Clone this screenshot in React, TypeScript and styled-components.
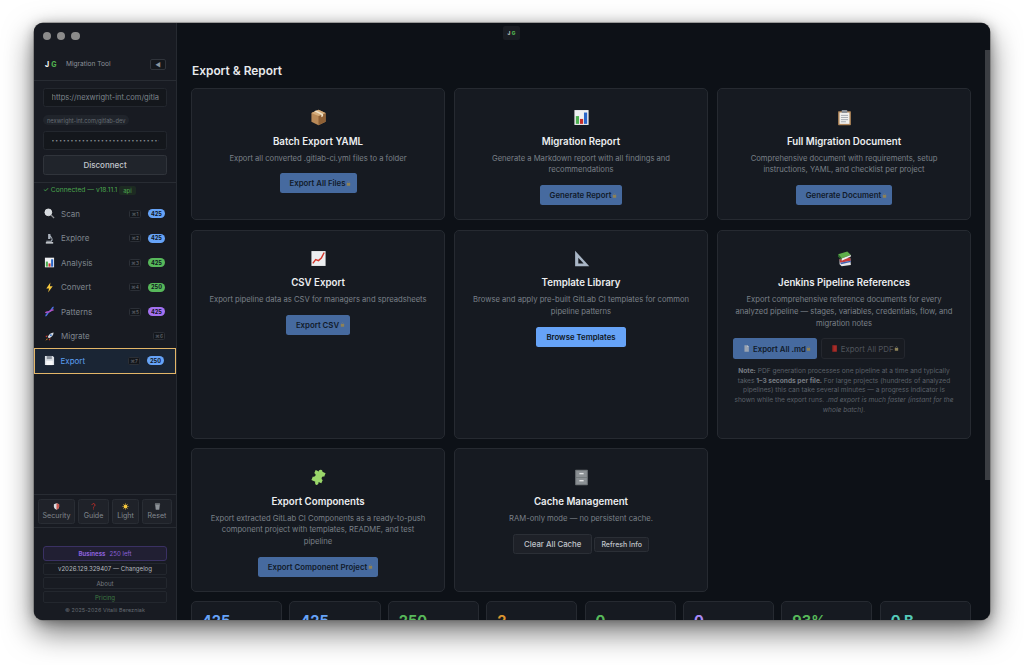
import React from 'react';
import styled, { createGlobalStyle } from 'styled-components';

const Global = createGlobalStyle`
  html, body { margin: 0; padding: 0; background: #fff; }
  * { box-sizing: border-box; }
  body { font-family: Inter, "Liberation Sans", sans-serif; }
`;

const Page = styled.div`
  padding: 23px 34px 45px;
  height: 665px;
  overflow: hidden;
`;
const Win = styled.div`
  position: relative;
  width: 956px;
  height: 597px;
  display: flex;
  border-radius: 9px;
  overflow: hidden;
  background: #0d1117;
  box-shadow: 0 0 0 .5px #666, 0 12px 30px rgba(0,0,0,.55), 0 2px 12px rgba(0,0,0,.3);
`;
const Side = styled.aside`
  width: 143px;
  flex: none;
  display: flex;
  flex-direction: column;
  background: #181b22;
  border-right: 1px solid #262a31;
`;
const Traffic = styled.div`
  height: 27px;
  display: flex;
  gap: 5.7px;
  padding: 9px 0 0 9px;
`;
const Dot = styled.span`
  width: 8.4px;
  height: 8.4px;
  border-radius: 50%;
  background: #8b8b8b;
`;
const Brand = styled.div`
  height: 31px;
  display: flex;
  align-items: center;
  padding: 0 10px 2px 11px;
  border-bottom: 1px solid #282c33;
`;
const LogoMark = styled.span`
  width: 13px;
  font-size: 7px;
  font-weight: 800;
  color: #f0f0f0;
  white-space: nowrap;
  b { color: #4fae4e; font-weight: 800; margin-left: 2px; }
`;
const BrandText = styled.span`
  flex: 1;
  margin-left: 8px;
  font-size: 6.6px;
  color: #8a9098;
`;
const Collapse = styled.span`
  width: 16px;
  height: 11px;
  display: flex;
  align-items: center;
  justify-content: center;
  border: 1px solid #30343b;
  border-radius: 2px;
  font-size: 6px;
  color: #8b949e;
  background: #14171c;
`;
const Conn = styled.div`
  padding: 7px 9px 7px;
  display: flex;
  flex-direction: column;
  align-items: flex-start;
  border-bottom: 1px solid #282c33;
`;
const Field = styled.div`
  width: 124px;
  height: 19px;
  padding: 0 7.5px;
  display: flex;
  align-items: center;
  border: 1px solid #23272e;
  border-radius: 2.5px;
  background: #14171c;
  font-size: 7.5px;
  color: #7d848c;
`;
const FieldText = styled.span`
  display: block;
  width: 100%;
  overflow: hidden;
  white-space: nowrap;
`;
const HostChip = styled.span`
  margin: 8px 0 5.5px;
  height: 10px;
  padding: 0 4px;
  display: flex;
  align-items: center;
  border-radius: 5px;
  background: #20242b;
  font-size: 5.7px;
  color: #666c74;
`;
const Dots = styled(Field)`
  font-size: 5px;
  letter-spacing: 1px;
  color: #8a9098;
`;
const Disconnect = styled.div`
  margin-top: 5px;
  width: 124px;
  height: 20px;
  display: flex;
  align-items: center;
  justify-content: center;
  border: 1px solid #30343b;
  border-radius: 2.5px;
  background: #20242b;
  font-size: 8px;
  font-weight: 500;
  color: #c3c8ce;
`;
const Status = styled.div`
  height: 15px;
  padding: 0 9px;
  display: flex;
  align-items: center;
  font-size: 6.7px;
  color: #4aa64d;
  white-space: nowrap;
`;
const ApiChip = styled.span`
  margin-left: 2px;
  padding: 1px 4px;
  border-radius: 2px;
  background: #1d2a22;
  font-size: 6px;
`;
const Nav = styled.nav`
  flex: 1;
  padding-top: 4px;
`;
const NavItem = styled.div<{ $active?: boolean }>`
  height: ${p => (p.$active ? 26 : 24.5)}px;
  margin-top: ${p => (p.$active ? -0.75 : 0)}px;
  display: flex;
  align-items: center;
  padding: 0 11px 0 ${p => (p.$active ? 8.5 : 10)}px;
  color: ${p => (p.$active ? '#5a9ff0' : '#7f868e')};
  background: ${p => (p.$active ? '#1a2534' : 'transparent')};
  border: ${p => (p.$active ? '1.5px solid #e3b668' : 'none')};
  font-size: 8px;
`;
const NavIcon = styled.span`
  width: 17px;
  display: flex;
  align-items: center;
`;
const NavLabel = styled.span`
  flex: 1;
`;
const Kbd = styled.span`
  width: 12px;
  height: 8px;
  display: flex;
  align-items: center;
  justify-content: center;
  border: .6px solid #2b2f36;
  border-radius: 1.5px;
  background: #13161b;
  font-size: 4.8px;
  color: #70767e;
`;
const Badge = styled.span<{ $c: string }>`
  margin-left: 7px;
  width: 17px;
  height: 8.6px;
  display: flex;
  align-items: center;
  justify-content: center;
  border-radius: 5px;
  background: ${p => p.$c};
  color: #0e1420;
  font-size: 5.6px;
  font-weight: 700;
`;
const BtnBar = styled.div`
  height: 34px;
  display: flex;
  gap: 3px;
  padding: 4px 0 0 4px;
  border-top: 1px solid #282c33;
  border-bottom: 1px solid #282c33;
`;
const ToolBtn = styled.div<{ $w: number }>`
  width: ${p => p.$w}px;
  height: 24.5px;
  display: flex;
  flex-direction: column;
  align-items: center;
  justify-content: center;
  gap: 1px;
  border: 1px solid #292d34;
  border-radius: 2.5px;
  background: #1f2229;
  font-size: 7.1px;
  color: #82888f;
`;
const Foot = styled.div`
  padding: 18px 9px 0;
  height: 92px;
  display: flex;
  flex-direction: column;
  align-items: center;
`;
const Plan = styled.div`
  width: 124px;
  height: 15px;
  flex: none;
  display: flex;
  align-items: center;
  justify-content: center;
  gap: 4px;
  border: 1px solid #3a3163;
  border-radius: 3px;
  background: #211f33;
  font-size: 6.1px;
  color: #8a60d8;
  b { font-weight: 700; }
`;
const FootRow = styled.div<{ $c: string }>`
  width: 124px;
  height: 12.3px;
  flex: none;
  margin-top: 1.8px;
  display: flex;
  align-items: center;
  justify-content: center;
  border: 1px solid #23272e;
  border-radius: 2px;
  font-size: 6.1px;
  color: ${p => p.$c};
`;
const Copy = styled.div`
  margin-top: 3.5px;
  font-size: 5.4px;
  color: #666b72;
  letter-spacing: .1px;
  white-space: nowrap;
`;
const Main = styled.main`
  flex: 1;
  height: 100%;
  overflow: hidden;
  padding: 39px 19px 0 14px;
  background: #0d1117;
`;
const Title = styled.h1`
  margin: 0 0 9px;
  height: 17px;
  line-height: 17px;
  font-size: 11.9px;
  font-weight: 600;
  color: #e8eaed;
  padding: 0 0 0 1px;
`;
const Grid = styled.div`
  display: grid;
  grid-template-columns: repeat(3, 254px);
  grid-template-rows: 132px 209px 144px;
  gap: 9.5px 9px;
`;
const Card = styled.section`
  display: flex;
  flex-direction: column;
  align-items: center;
  padding: 20px 15px 0;
  border: 1px solid #262a31;
  border-radius: 5px;
  background: #161a21;
`;
const BigIcon = styled.div`
  height: 16px;
  display: flex;
  align-items: center;
  justify-content: center;
`;
const CardTitle = styled.h2`
  margin: 9.5px 0 0;
  height: 13px;
  line-height: 13px;
  font-size: 9.7px;
  font-weight: 600;
  color: #eceef0;
  white-space: nowrap;
`;
const Desc = styled.p`
  margin: 5px 0 0;
  font-size: 7.65px;
  line-height: 11.8px;
  color: #7a8088;
  text-align: center;
`;
const Actions = styled.div<{ $mt?: number; $gap?: number; $left?: boolean }>`
  margin-top: ${p => p.$mt ?? 9}px;
  align-self: ${p => (p.$left ? 'stretch' : 'center')};
  display: flex;
  align-items: center;
  justify-content: ${p => (p.$left ? 'flex-start' : 'center')};
  gap: ${p => p.$gap ?? 4}px;
`;
const Primary = styled.div<{ $dim?: boolean; $h?: number }>`
  height: ${p => p.$h ?? 20}px;
  padding: 0 ${p => (p.$dim ? 5.5 : 10)}px 0 10px;
  display: flex;
  align-items: center;
  gap: .5px;
  white-space: nowrap;
  border-radius: 2.5px;
  background: ${p => (p.$dim ? '#466a9f' : '#66a3f7')};
  color: ${p => (p.$dim ? '#111a2a' : '#0e1520')};
  font-size: 7.8px;
  font-weight: 600;
`;
const PageGlyph = styled.span`
  display: flex;
  margin-right: 2.5px;
`;
const Ghost = styled.div`
  height: 21px;
  padding: 0 5px 0 9px;
  display: flex;
  align-items: center;
  gap: .5px;
  white-space: nowrap;
  border: 1px solid #24272e;
  border-radius: 3px;
  background: #181b21;
  color: #4f545b;
  font-size: 7.8px;
`;
const Secondary = styled.div<{ $small?: boolean }>`
  height: ${p => (p.$small ? 15 : 20)}px;
  padding: 0 ${p => (p.$small ? 6 : 10)}px;
  display: flex;
  align-items: center;
  white-space: nowrap;
  border: 1px solid #2b2f36;
  border-radius: 2.5px;
  background: #1e2128;
  color: #c0c5cb;
  font-size: ${p => (p.$small ? 7 : 7.8)}px;
  font-weight: 500;
`;
const Note = styled.p`
  margin: 7.5px 0 0;
  font-size: 6.6px;
  line-height: 9.8px;
  color: #5b6068;
  text-align: center;
  b { color: #777c83; font-weight: 700; }
  i { font-style: italic; }
`;
const Stats = styled.div`
  margin-top: 9px;
  display: grid;
  grid-template-columns: repeat(8, 91.2px);
  gap: 7.2px;
`;
const Stat = styled.div<{ $c: string }>`
  height: 60px;
  padding: 11px 10px 0;
  border: 1px solid #262a31;
  border-radius: 5px;
  background: #161a21;
  color: ${p => p.$c};
  font-size: 14.6px;
  font-weight: 700;
  line-height: 16px;
`;
const Thumb = styled.div`
  position: absolute;
  right: 0;
  top: 27px;
  width: 5px;
  height: 430px;
  background: #3b3e43;
`;
const Tag = styled.div`
  position: absolute;
  left: 469px;
  top: 3px;
  width: 17px;
  height: 14px;
  display: flex;
  align-items: center;
  justify-content: center;
  border-radius: 2px;
  background: #1a1d23;
  font-size: 4.8px;
  font-weight: 700;
  color: #d8d8d8;
  b { color: #4fae4e; margin-left: 1.5px; }
`;

type IName = 'package'|'bars'|'clip'|'trend'|'ruler'|'books'|'puzzle'|'cabinet'|'search'|'micro'|'bolt'|'dna'|'rocket'|'floppy'|'shield'|'q'|'sun'|'trash'|'lock'|'page'|'redbook';

const paths: Record<IName, React.ReactNode> = {
  package: <><path d="M12 1 22 5.5V18L12 23 2 18V5.5Z" fill="#b98a58"/><path d="M12 10 22 5.5V18L12 23Z" fill="#8f6136"/><path d="M12 1 22 5.5 12 10 2 5.5Z" fill="#d5ad7c"/><path d="M6 3.3 16 8v3.5l2.5-1.2V7L8.5 2.2Z" fill="#efe2c9"/></>,
  bars: <><rect x="2" y="1.5" width="20" height="21" fill="#eef0f2"/><rect x="4" y="10" width="4.5" height="11" fill="#4caf50"/><rect x="9.8" y="14" width="4.5" height="7" fill="#c62f2a"/><rect x="15.5" y="5" width="4.5" height="16" fill="#2a66c8"/></>,
  clip: <><rect x="3" y="3" width="18" height="20" rx="1" fill="#b2875a"/><rect x="5" y="5" width="14" height="16" fill="#f0f0ee"/><rect x="8" y="1.5" width="8" height="4" rx="1" fill="#8a8f96"/><path d="M7 9h10M7 12h10M7 15h10M7 18h7" stroke="#8a919a" strokeWidth="1"/></>,
  trend: <><rect x="2" y="1.5" width="20" height="21" fill="#eceef0"/><path d="M4 19 8 13.5 12 15 16 11.5 20 3.5" fill="none" stroke="#d3362b" strokeWidth="2"/></>,
  ruler: <><path d="M3 1 23 23H3Z" fill="#a9b6c6"/><path d="M7.500 11 15 19H7.500Z" fill="#161a21"/></>,
  books: <><path d="M5 13 20 11 21 21 8 23 5 20Z" fill="#e4e6e8"/><path d="M5 13 20 11 20.500 15 6 18Z" fill="#c63a3a"/><path d="M6 18 20.500 15 21 17 7 20Z" fill="#3e5fb0"/><path d="M3 6 16 2 21 7 8 12Z" fill="#5fae4a"/><path d="M3 6 8 12 8 15 3 9Z" fill="#2f6f2e"/><path d="M8 12 21 7 21 9 8 15Z" fill="#f0f0ee"/></>,
  puzzle: <path d="M15 1c2 0 3 1.500 2.500 3L22 6l-2 5c-1.500-.6-3-.2-3.500 1.300S17 15 18 15.500L16 20l-4-1.500c.4 2-.5 4-2.500 4S6.500 20 7.500 18L2 15.500l2-5c1.500.8 3.200.4 3.800-1.200S7.500 6.500 6 6L8 1.500 12.500 3.500C12.300 2 13.300 1 15 1Z" fill="#9ad66a"/>,
  cabinet: <><rect x="3" y="1" width="18" height="22" rx="1" fill="#6f7478"/><rect x="4.500" y="2.500" width="15" height="9" fill="#8b9094"/><rect x="4.500" y="12.500" width="15" height="9" fill="#8b9094"/><rect x="9" y="5.500" width="6" height="2" fill="#e2e4e6"/><rect x="9" y="15.500" width="6" height="2" fill="#e2e4e6"/></>,
  search: <><circle cx="9.500" cy="9.500" r="7.500" fill="#d6dadf" stroke="#f0f2f4" strokeWidth="1.500"/><path d="M15 15 22 22" stroke="#8d8f93" strokeWidth="3"/></>,
  micro: <><path d="M9 2h5v3l4 6a7 7 0 0 1-1 8H5v-2h10a5 5 0 0 0 1-6l-2-2v4H9Z" fill="#aab2bc"/><rect x="4" y="20" width="16" height="3" fill="#dfe3e7"/></>,
  bolt: <path d="M14 1 5 14h6L9 23l10-14h-6Z" fill="#f6c83e"/>,
  dna: <><path d="M3 21C7 21 7 13 12 12S17 3 21 3" fill="none" stroke="#4a70e0" strokeWidth="3.500"/><path d="M3 15c3-3 6-1 9-3s5-4 9-3" fill="none" stroke="#b04fc0" strokeWidth="3"/></>,
  rocket: <><path d="M21 3c-6 .5-10 4-13 10l3 3c6-3 9.500-7 10-13Z" fill="#d5dbe2"/><circle cx="15" cy="9" r="2" fill="#3f78c8"/><path d="M8 10 3 11l3 3ZM14 16l-1 5-3-3Z" fill="#d23b30"/><path d="M7 16l-4 5 5-3Z" fill="#f4a322"/></>,
  floppy: <><path d="M2 2h17l3 3v17H2Z" fill="#dbe0e6"/><rect x="6" y="2" width="11" height="7" fill="#8c949e"/><rect x="5" y="13" width="14" height="9" fill="#f7f8f9"/></>,
  shield: <><path d="M12 1 21 4v8c0 5-4 9-9 11-5-2-9-6-9-11V4Z" fill="#d9dde2"/><path d="M12 1 21 4v8c0 5-4 9-9 11Z" fill="#c9574e"/></>,
  q: <path d="M7 7a5 5 0 1 1 8 4c-2 1.500-3 2.500-3 5M12 19v3" fill="none" stroke="#c92f2a" strokeWidth="3.200"/>,
  sun: <><circle cx="12" cy="12" r="6.500" fill="#f5c63c"/><path d="M12 1v4M12 19v4M1 12h4M19 12h4M4 4l3 3M17 17l3 3M20 4l-3 3M7 17l-3 3" stroke="#f5c63c" strokeWidth="1.800"/></>,
  trash: <><path d="M4 6h16l-2 17H6Z" fill="#8d9298"/><rect x="3" y="2" width="18" height="3.500" rx="1" fill="#a4a9ae"/></>,
  lock: <><path d="M8 11V7a4 4 0 0 1 8 0v4" fill="none" stroke="#7f8078" strokeWidth="2.500"/><rect x="4" y="10" width="16" height="13" rx="1.500" fill="#8d8258"/></>,
  page: <><path d="M5 1h10l5 5v17H5Z" fill="#9aa4b2"/><path d="M15 1l5 5h-5Z" fill="#d5dae0"/></>,
  redbook: <><rect x="5" y="1" width="15" height="22" fill="#a82c28"/><rect x="5" y="1" width="3" height="22" fill="#7d1d1b"/></>,
};

const Icon = ({ n, s }: { n: IName; s: number }) => (
  <svg width={s} height={s} viewBox="0 0 24 24" style={{ flex: 'none' }}>{paths[n]}</svg>
);

const nav: { i: IName; l: string; k: string; b?: string; c?: string }[] = [
  { i: 'search', l: 'Scan', k: '⌘1', b: '425', c: '#66a3f7' },
  { i: 'micro', l: 'Explore', k: '⌘2', b: '425', c: '#66a3f7' },
  { i: 'bars', l: 'Analysis', k: '⌘3', b: '425', c: '#57b85a' },
  { i: 'bolt', l: 'Convert', k: '⌘4', b: '250', c: '#57b85a' },
  { i: 'dna', l: 'Patterns', k: '⌘5', b: '425', c: '#a371f0' },
  { i: 'rocket', l: 'Migrate', k: '⌘6' },
];

const Lock = () => <Icon n="lock" s={5} />;

export default function App() {
  return (
    <Page>
      <Global />
      <Win>
        <Side>
          <Traffic><Dot /><Dot /><Dot /></Traffic>
          <Brand>
            <LogoMark>J<b>G</b></LogoMark>
            <BrandText>Migration Tool</BrandText>
            <Collapse>◀</Collapse>
          </Brand>
          <Conn>
            <Field><FieldText>https://nexwright-int.com/gitlab-dev</FieldText></Field>
            <HostChip>nexwright-int.com/gitlab-dev</HostChip>
            <Dots><FieldText>••••••••••••••••••••••••••••••••••••••••</FieldText></Dots>
            <Disconnect>Disconnect</Disconnect>
          </Conn>
          <Status>✓ Connected — v18.11.1<ApiChip>api</ApiChip></Status>
          <Nav>
            {nav.map(n => (
              <NavItem key={n.l}>
                <NavIcon><Icon n={n.i} s={11} /></NavIcon>
                <NavLabel>{n.l}</NavLabel>
                <Kbd>{n.k}</Kbd>
                {n.b ? <Badge $c={n.c!}>{n.b}</Badge> : null}
              </NavItem>
            ))}
            <NavItem $active>
              <NavIcon><Icon n="floppy" s={11} /></NavIcon>
              <NavLabel>Export</NavLabel>
              <Kbd>⌘7</Kbd>
              <Badge $c="#66a3f7">250</Badge>
            </NavItem>
          </Nav>
          <BtnBar>
            <ToolBtn $w={37}><Icon n="shield" s={7} />Security</ToolBtn>
            <ToolBtn $w={31}><Icon n="q" s={7} />Guide</ToolBtn>
            <ToolBtn $w={27}><Icon n="sun" s={7} />Light</ToolBtn>
            <ToolBtn $w={30}><Icon n="trash" s={7} />Reset</ToolBtn>
          </BtnBar>
          <Foot>
            <Plan><b>Business</b> 250 left</Plan>
            <FootRow $c="#b4b9bf">v2026.129.329407 — Changelog</FootRow>
            <FootRow $c="#74797f">About</FootRow>
            <FootRow $c="#3e7a44">Pricing</FootRow>
            <Copy>© 2025-2026 Vitalii Berezniak</Copy>
          </Foot>
        </Side>
        <Main>
          <Title>Export &amp; Report</Title>
          <Grid>
            <Card>
              <BigIcon><Icon n="package" s={17} /></BigIcon>
              <CardTitle>Batch Export YAML</CardTitle>
              <Desc>Export all converted .gitlab-ci.yml files to a folder</Desc>
              <Actions><Primary $dim>Export All Files<Lock /></Primary></Actions>
            </Card>
            <Card>
              <BigIcon><Icon n="bars" s={17} /></BigIcon>
              <CardTitle>Migration Report</CardTitle>
              <Desc>Generate a Markdown report with all findings and recommendations</Desc>
              <Actions><Primary $dim>Generate Report<Lock /></Primary></Actions>
            </Card>
            <Card>
              <BigIcon><Icon n="clip" s={17} /></BigIcon>
              <CardTitle>Full Migration Document</CardTitle>
              <Desc>Comprehensive document with requirements, setup instructions, YAML, and checklist per project</Desc>
              <Actions><Primary $dim>Generate Document<Lock /></Primary></Actions>
            </Card>
            <Card>
              <BigIcon><Icon n="trend" s={17} /></BigIcon>
              <CardTitle>CSV Export</CardTitle>
              <Desc>Export pipeline data as CSV for managers and spreadsheets</Desc>
              <Actions><Primary $dim>Export CSV<Lock /></Primary></Actions>
            </Card>
            <Card>
              <BigIcon><Icon n="ruler" s={17} /></BigIcon>
              <CardTitle>Template Library</CardTitle>
              <Desc>Browse and apply pre-built GitLab CI templates for common pipeline patterns</Desc>
              <Actions><Primary>Browse Templates</Primary></Actions>
            </Card>
            <Card>
              <BigIcon><Icon n="books" s={17} /></BigIcon>
              <CardTitle>Jenkins Pipeline References</CardTitle>
              <Desc>Export comprehensive reference documents for every analyzed pipeline — stages, variables, credentials, flow, and migration notes</Desc>
              <Actions $left>
                <Primary $dim $h={21}><PageGlyph><Icon n="page" s={7} /></PageGlyph>Export All .md<Lock /></Primary>
                <Ghost><PageGlyph><Icon n="redbook" s={7} /></PageGlyph>Export All PDF<Lock /></Ghost>
              </Actions>
              <Note><b>Note:</b> PDF generation processes one pipeline at a time and typically takes <b>1–3 seconds per file.</b> For large projects (hundreds of analyzed pipelines) this can take several minutes — a progress indicator is shown while the export runs. <i>.md export is much faster (instant for the whole batch).</i></Note>
            </Card>
            <Card>
              <BigIcon><Icon n="puzzle" s={17} /></BigIcon>
              <CardTitle>Export Components</CardTitle>
              <Desc>Export extracted GitLab CI Components as a ready-to-push component project with templates, README, and test pipeline</Desc>
              <Actions><Primary $dim>Export Component Project<Lock /></Primary></Actions>
            </Card>
            <Card>
              <BigIcon><Icon n="cabinet" s={17} /></BigIcon>
              <CardTitle>Cache Management</CardTitle>
              <Desc>RAM-only mode — no persistent cache.</Desc>
              <Actions $mt={10} $gap={2}>
                <Secondary>Clear All Cache</Secondary>
                <Secondary $small>Refresh Info</Secondary>
              </Actions>
            </Card>
          </Grid>
          <Stats>
            <Stat $c="#66a3f7">425</Stat>
            <Stat $c="#66a3f7">425</Stat>
            <Stat $c="#57b85a">250</Stat>
            <Stat $c="#d9952f">2</Stat>
            <Stat $c="#57b85a">0</Stat>
            <Stat $c="#a98af5">0</Stat>
            <Stat $c="#57b85a">93%</Stat>
            <Stat $c="#55c9b8">0 B</Stat>
          </Stats>
        </Main>
        <Thumb />
        <Tag>J<b>G</b></Tag>
      </Win>
    </Page>
  );
}
